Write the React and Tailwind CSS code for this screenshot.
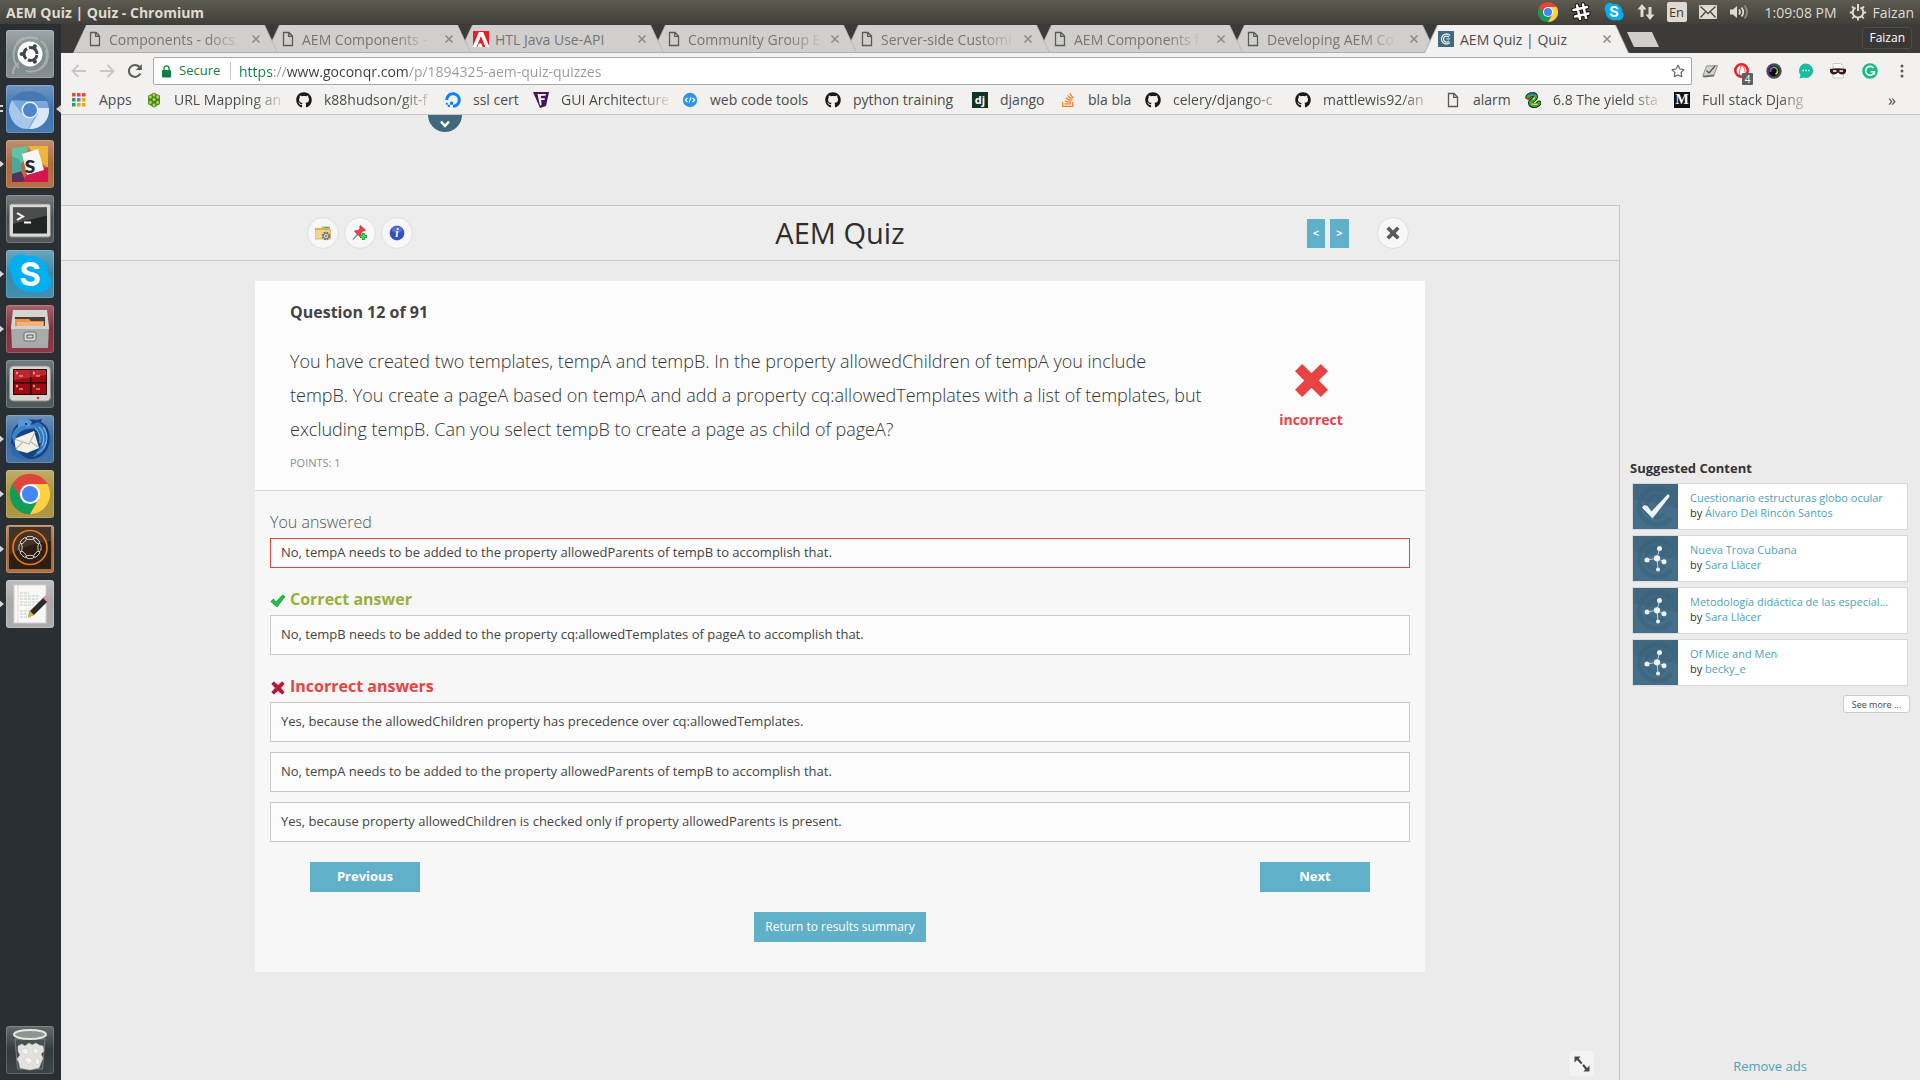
import React from 'react';
import { FaGithub, FaDigitalOcean, FaStackOverflow, FaRegStar } from 'react-icons/fa';

/* ---------- small icons ---------- */

const Doc = () => (
  <svg viewBox="0 0 16 16" className="size-4 shrink-0" fill="none" stroke="#5a5a5a" strokeWidth="1.300">
    <path d="M3.500 1.500h5.500l3.500 3.500v9.500h-9zM8.700 1.500v3.800h3.800" />
  </svg>
);

const Adobe = () => (
  <svg viewBox="0 0 16 16" className="size-4 shrink-0">
    <rect width="16" height="16" fill="#ed1c24" />
    <path d="M0 16V15L5.800 1h4.400L16 15v1h-3.800L8 5.600 5.600 11.500h3l1.500 4.500H0z" fill="#fff" />
    <path d="M3.500 16 8 5.600 12.200 16H9.700L8.500 12.500H5.900L4.500 16z" fill="#ed1c24" />
  </svg>
);

const Conqr = () => (
  <svg viewBox="0 0 16 16" className="size-4 shrink-0">
    <rect width="16" height="16" fill="#3f6a80" />
    <path d="M12 4.500A5 5 0 1 0 12 11.500M11 6.300A3 3 0 1 0 11 9.800" fill="none" stroke="#dfe9ee" strokeWidth="1.300" />
    <path d="M8.200 8H12" stroke="#dfe9ee" strokeWidth="1.200" />
  </svg>
);

const CloseX = () => (
  <svg viewBox="0 0 16 16" className="size-4" stroke="#8b8b8a" strokeWidth="1.500">
    <path d="M4.500 4.500l7 7M11.500 4.500l-7 7" />
  </svg>
);

const AppsGrid = () => (
  <svg viewBox="0 0 16 16" className="size-4 shrink-0">
    {['#e8453c', '#e8453c', '#e8453c', '#2a9d58', '#4285f4', '#f2a600', '#2a9d58', '#f2a600', '#f2a600'].map((c, i) => (
      <rect key={i} x={1 + (i % 3) * 5} y={1 + Math.floor(i / 3) * 5} width="3.500" height="3.500" fill={c} />
    ))}
  </svg>
);

const Balls = () => (
  <svg viewBox="0 0 16 16" className="size-4 shrink-0">
    <path d="M8 .8 14 4v8l-6 3.400L2 12V4z" fill="#4c8a18" />
    {[[8, 3], [4.300, 5], [11.700, 5], [8, 7.500], [4.300, 10.500], [11.700, 10.500], [8, 13]].map(([x, y]) => (
      <circle key={x + '-' + y} cx={x} cy={y} r="1.900" fill="#a6d75b" stroke="#356b10" strokeWidth=".5" />
    ))}
  </svg>
);

const FIcon = () => (
  <svg viewBox="0 0 16 16" className="size-4 shrink-0">
    <path d="M0 0h16l-3 14-6 2z" fill="#4a1259" />
    <path d="M4.500 2h8.500l-.5 1.800H8l-.4 2.500H12l-.5 1.800H8.200L8.500 13l-1.500.5z" fill="#fff" />
  </svg>
);

const CodeIcon = () => (
  <svg viewBox="0 0 16 16" className="size-4 shrink-0">
    <circle cx="8" cy="8" r="7.200" fill="#2f95ea" />
    <path d="M5.500 5.800 3.300 8l2.200 2.200M10.500 5.800 12.700 8l-2.200 2.200M8.800 5.300 7.200 10.700" fill="none" stroke="#fff" strokeWidth="1.200" />
  </svg>
);

const DjIcon = () => (
  <span className="flex size-4 shrink-0 items-center justify-center bg-[#113228] text-[11px] leading-none font-bold text-white">dj</span>
);

const MIcon = () => (
  <span className="flex size-4 shrink-0 items-center justify-center bg-[#111] font-['Liberation_Serif',serif] text-[14px] leading-none font-bold text-white">M</span>
);

const Snake = () => (
  <svg viewBox="0 0 16 16" className="size-4 shrink-0" fill="none" strokeLinecap="round">
    <path d="M3 5C5 2 10.500 1.500 10.500 5 10 8 5.500 8 5.500 11c.5 3 6.500 3.500 8.500 0" stroke="#111" strokeWidth="5" />
    <path d="M3 5C5 2 10.500 1.500 10.500 5 10 8 5.500 8 5.500 11c.5 3 6.500 3.500 8.500 0" stroke="#2fae2f" strokeWidth="3.400" />
    <path d="M1 6.500h4" stroke="#d22" strokeWidth="1.200" />
    <path d="M4 2l3-1 2 1" stroke="#2b4fc4" strokeWidth="1.800" />
    <path d="M7 12l5 .3M8 7.500l1.500-1.500" stroke="#e8e03a" strokeWidth="1.300" />
  </svg>
);

/* Chrome-style wheel, used in the tray and in the launcher */
const Wheel = ({ className, colors, hub }) => (
  <svg viewBox="0 0 48 48" className={className}>
    <circle cx="24" cy="24" r="22" fill={colors[0]} />
    <path d="M4.950 13A22 22 0 0 0 24 46L33.500 29.500 24 34 14.500 29.500z" fill={colors[1]} />
    <path d="M43.050 13H24L33.500 29.500 24 46A22 22 0 0 0 43.050 13z" fill={colors[2]} />
    <circle cx="24" cy="24" r="11" fill="#fff" />
    <circle cx="24" cy="24" r="8.800" fill={hub} />
  </svg>
);

/* ---------- launcher ---------- */

const skypeBlob =
  'M13 4.500c3.500-1 6 .2 8 1.700C31 4 42 11 42.500 24c2.500 4 3.500 8.500 1 13-3 5-9 6.500-14 4.500C19 44 6.500 37 6 25 3 20 3 14 5.500 10 7 7 10 5 13 4.500z';

const launcherItems = [
  {
    name: 'Search your computer', bg: 'bg-[#7f898b]',
    art: (
      <>
        <g fill="none" stroke="#c2cacb" strokeWidth="2" opacity=".55">
          <path d="M8 29C5 14 18 4 32 9M13 38C3 28 8 12 18 8M40 20c4 14-8 24-20 21M35 11c11 9 8 24-3 29M7 44c0-6 3-9 6-11" />
        </g>
        <circle cx="24" cy="24" r="12.500" fill="#fff" />
        <circle cx="24.500" cy="24" r="6.500" fill="none" stroke="#3f474a" strokeWidth="3" strokeDasharray="11.600 2" strokeDashoffset="-1" />
        <circle cx="15.700" cy="24" r="2.100" fill="#3f474a" />
        <circle cx="28.800" cy="16.300" r="2.100" fill="#3f474a" />
        <circle cx="28.800" cy="31.700" r="2.100" fill="#3f474a" />
      </>
    ),
  },
  {
    name: 'Chromium', bg: 'bg-[#3f74b0]', active: true,
    art: (
      <>
        <circle cx="24" cy="25" r="19" fill="#79a8dd" />
        <path d="M6 15A19 19 0 0 0 22 44l8-15-6 4-9-5z" fill="#a7c7eb" />
        <path d="M43 23H30l2 6-9 15A19 19 0 0 0 43 23z" fill="#d9e8f8" />
        <path d="M5 15C13 3 35 3 42 16L24 16z" fill="#4579b3" />
        <circle cx="24" cy="25" r="8.500" fill="#e8f1fb" />
        <circle cx="24" cy="25" r="7" fill="#4c86cf" />
      </>
    ),
  },
  {
    name: 'Slack', bg: 'bg-[#b0693f]', running: true,
    art: (
      <>
        <path d="M6 8 22 6 17 22 6 30z" fill="#5fc2a0" />
        <path d="M6 28 15 31 20 42 6 42z" fill="#5b3159" />
        <path d="M6 16 14 20 16 31 6 34z" fill="#4aa89a" />
        <path d="M22 6H42v22L32 20z" fill="#ecb53b" />
        <path d="M42 27V42H17l4-9z" fill="#d6154f" />
        <path d="M16 14 32 9l6 21-17 5z" fill="#f7f6f2" />
        <text x="24" y="33" textAnchor="middle" fontSize="25" fontWeight="700" fontFamily="Lato, sans-serif" fill="#262833">s</text>
      </>
    ),
  },
  {
    name: 'Terminal', bg: 'bg-[#4a5052]',
    art: (
      <>
        <rect x="3.500" y="9" width="41" height="33" rx="2" fill="#d9d9d7" stroke="#8b8b89" />
        <rect x="7" y="12.500" width="34" height="26" fill="#232424" />
        <path d="M7 12.500h34v8L7 29z" fill="#4b4c4c" />
        <path d="M11 18l6 3.500-6 3.500M18 27.500h7" fill="none" stroke="#fff" strokeWidth="2" />
      </>
    ),
  },
  {
    name: 'Skype', bg: 'bg-[#3a89ab]', running: true,
    art: (
      <>
        <path d={skypeBlob} fill="#00aff0" />
        <text x="24" y="36" textAnchor="middle" fontSize="33" fontWeight="700" fontFamily="Inter, sans-serif" fill="#fff">S</text>
      </>
    ),
  },
  {
    name: 'Files', bg: 'bg-[#84303d]', running: true,
    art: (
      <>
        <path d="M7 5h34l2 17H5z" fill="#d4d4d2" />
        <path d="M9 12h30v9H9z" fill="#49403a" />
        <path d="M9 14h14l2 2h13v6H9z" fill="#ef8f45" />
        <path d="M11 17h26v5H11z" fill="#f7b27a" />
        <path d="M5 21h38l-1 22H6z" fill="#a9abab" />
        <path d="M5 21h38v3H5z" fill="#cfd0d0" />
        <rect x="18" y="27" width="12" height="9" rx="2" fill="#d9dada" stroke="#6e7070" />
        <rect x="21" y="30" width="6" height="3" fill="none" stroke="#595b5b" />
      </>
    ),
  },
  {
    name: 'Terminator', bg: 'bg-[#4a5355]',
    art: (
      <>
        <rect x="3.500" y="6" width="41" height="35" rx="4" fill="#d5d6d2" stroke="#8f918e" />
        <rect x="7" y="9" width="34" height="26" fill="#2a0405" />
        <path d="M8 10h16v12H8zM25.500 10H40v12H25.500zM8 23.500h16V34H8zM25.500 23.500H40V34H25.500z" fill="#9d0a10" />
        <path d="M8 10h32v5L8 20z" fill="#d33a3d" opacity=".6" />
        <path d="M10 12l2 1-2 1M13 16h4M27 12l2 1-2 1M30 16h4M10 25l2 1-2 1M13 29h4M27 25l2 1-2 1M30 29h4" stroke="#f2b9b9" fill="none" />
        <circle cx="32" cy="38" r="1.200" fill="#e02020" />
      </>
    ),
  },
  {
    name: 'Thunderbird', bg: 'bg-[#3b6ca4]', running: true,
    art: (
      <>
        <path d="M6 18C9 7 20 3 30 5l6-1-1 3c8 4 10 13 8 22-2 9-9 15-18 15C14 44 5 37 5 28z" fill="#17427f" />
        <path d="M32 7c8 4 10 12 9 20-1 8-7 14-15 15 6-5 10-11 9-19-1-7-5-11-10-13z" fill="#2f78bf" />
        <path d="M33 12c5 5 6 12 3 19M37 12c5 6 5 14 1 21M28 12c5 4 7 9 6 16M31 38c5-2 8-6 9-11" stroke="#7db4e2" strokeWidth="1.200" fill="none" />
        <path d="M8 24l20-8 5 17-12 5-11-3z" fill="#f4f1e9" />
        <path d="M8 24l15 5 6-12M10 34l7-7M32 32l-7-5" fill="none" stroke="#b9b4a6" strokeWidth="1.100" />
        <path d="M5 36c1 5 8 9 17 8l-6-4-5-5-6-7z" fill="#2c69ab" />
        <path d="M6 22c1-8 7-13 15-13 4 0 7 1 8 4l-6 1c-6 0-10 3-13 8l-2 6z" fill="#3a83c6" />
        <path d="M12 6c3-3 10-3 14 1l-3 5c-4-2-8-1-11 1z" fill="#5598d4" />
        <circle cx="20" cy="9" r="1" fill="#0c1c34" />
      </>
    ),
  },
  { name: 'Google Chrome', bg: 'bg-[#a9933a]', running: true, wheel: true },
  {
    name: 'AEM Quickstart', bg: 'bg-[#a8683a]', running: true,
    art: (
      <>
        <rect x="3" y="2" width="42" height="42" fill="#2b1e15" />
        <path d="M3 2h42v14Q24 18 3 30z" fill="#5a4a3e" opacity=".5" />
        <circle cx="24" cy="22.500" r="17" fill="none" stroke="#f07a12" strokeWidth="1.700" />
        {[0, 45, 90, 135, 180, 225, 270, 315].map((a) => (
          <ellipse key={a} cx="24" cy="13" rx="4" ry="1.700" fill="none" stroke="#ead9cc" strokeWidth=".9" transform={`rotate(${a} 24 22.500)`} />
        ))}
      </>
    ),
  },
  {
    name: 'Text Editor', bg: 'bg-[#a9a9a9]', running: true,
    art: (
      <>
        <rect x="8" y="5" width="32" height="38" fill="#f8f8f6" stroke="#d0d0ce" />
        <path d="M12 5v38" stroke="#f0b9b9" strokeWidth=".6" />
        <path d="M14 13h9M14 16h20M14 19h18M14 22h20M14 25h14M14 31h12M14 34h9M14 37h12" stroke="#b7bcc0" strokeWidth=".8" strokeDasharray="3 1" />
        <path d="M24 31 38 17l4 4-14 14-6 2z" fill="#2b2b2b" />
        <path d="M24 31l4 4-6 2.500z" fill="#d9b93a" />
        <path d="M37 18l3-3 4 4-3 3z" fill="#e291ae" />
      </>
    ),
  },
];

const trash = (
  <>
    <path d="M9 13h30l-2.500 30h-25z" fill="#4a5252" opacity=".7" stroke="#8f9595" />
    <g fill="#e2e2df" stroke="#c6c6c2" strokeWidth=".5">
      <path d="M12 20l4-2 3 2 4-3 3 2 4-2 3 2 4 1 1 5-3 3 2 4-2 5-2 5-5 1-4 1-5-1-5-1-1-5-2-4 3-4-2-4z" />
      <path d="M15 24l5-2 3 4-4 3zM27 22l4 0 2 4-5 3zM18 33l5-2 4 4-5 4zM29 33l4-1 1 5-4 2z" fill="#f2f2f0" />
    </g>
    <ellipse cx="24" cy="8.500" rx="16" ry="4.500" fill="#8e9393" stroke="#e6e6e4" strokeWidth="2" />
  </>
);

function Tile({ item }) {
  return (
    <button
      type="button"
      aria-label={item.name}
      className={`relative mx-auto size-12 shrink-0 rounded-[3px] bg-gradient-to-b from-white/25 via-transparent to-white/5 shadow-[inset_0_0_0_1px_rgba(255,255,255,0.18)] ${item.bg}`}
    >
      {item.wheel ? (
        <Wheel className="mx-auto size-[44px]" colors={['#e0453b', '#0f9d58', '#fdd046']} hub="#4285f4" />
      ) : (
        <svg viewBox="0 0 48 48" className="size-12">{item.art}</svg>
      )}
      {item.running && (
        <span className="absolute top-1/2 -left-[7px] -mt-1 border-y-4 border-l-[5px] border-y-transparent border-l-[#d5d6d6]" />
      )}
      {item.active && (
        <>
          <span className="absolute top-5 -left-[7px] h-[7px] w-1 border-y-2 border-[#d5d6d6]" />
          <span className="absolute top-5 -right-[7px] border-y-4 border-r-[5px] border-y-transparent border-r-[#d5d6d6]" />
        </>
      )}
    </button>
  );
}

const Launcher = () => (
  <nav aria-label="Launcher" className="flex w-[61px] shrink-0 flex-col gap-[7px] overflow-hidden bg-[#2a2f33] pt-1.5 pr-px pb-1.5">
    {launcherItems.map((item) => (
      <Tile key={item.name} item={item} />
    ))}
    <div className="mt-auto flex">
      <Tile item={{ name: 'Trash', bg: 'bg-[#343b3e]', art: trash }} />
    </div>
  </nav>
);

/* ---------- system bar ---------- */

const SystemBar = () => (
  <header className="flex h-6 items-center bg-gradient-to-b from-[#5e5b50] to-[#403f3a] px-1.5 text-[14px] text-[#dfdbd2]">
    <h1 className="text-[14px] font-bold">AEM Quiz | Quiz - Chromium</h1>
    <div className="ml-auto flex items-center gap-3">
      <Wheel className="size-[22px]" colors={['#e0453b', '#0f9d58', '#fdd046']} hub="#4285f4" />
      <svg viewBox="0 0 20 20" className="size-5" fill="none" strokeLinecap="round">
        <path d="M6 3.500 9 17M12 2.500 15 16M2.500 8 16 5M4 14.500 17.500 11.500" stroke="#111" strokeWidth="4.500" />
        <path d="M6 3.500 9 17M12 2.500 15 16M2.500 8 16 5M4 14.500 17.500 11.500" stroke="#fff" strokeWidth="2.500" />
      </svg>
      <svg viewBox="0 0 48 48" className="size-[22px]">
        <path d={skypeBlob} fill="#00aff0" />
        <text x="24" y="35" textAnchor="middle" fontSize="32" fontWeight="700" fontFamily="Inter, sans-serif" fill="#fff">S</text>
      </svg>
      <svg viewBox="0 0 18 18" className="size-[18px]" fill="#dfdbd2">
        <path d="M5 1 9.500 6.500H6.500V14h-3V6.500H.5zM13 17 8.500 11.500h3V4h3v7.500h3z" />
      </svg>
      <span className="flex size-5 items-center justify-center rounded-[2px] bg-[#dfdbd2] text-[13px] leading-none text-[#3c3b37]">En</span>
      <svg viewBox="0 0 18 14" className="h-3.5 w-[18px]">
        <rect width="18" height="14" rx="1" fill="#dfdbd2" />
        <path d="M1.500 1.500 9 8.500l7.500-7M1.500 12.500l5-5.500M16.500 12.500l-5-5.500" fill="none" stroke="#4a4944" strokeWidth="1.300" />
      </svg>
      <svg viewBox="0 0 20 16" className="h-4 w-5" fill="none" stroke="#dfdbd2" strokeWidth="1.700">
        <path d="M1 5.500h3L8 2v12l-4-3.500H1z" fill="#dfdbd2" stroke="none" />
        <path d="M10 5.500q2 2.500 0 5M12.500 3.500q3.500 4.500 0 9" />
        <path d="M15.500 1.500q5 6.500 0 13" opacity=".45" />
      </svg>
      <span className="ml-1">1:09:08 PM</span>
      <span className="flex items-center gap-1.5">
        <svg viewBox="0 0 18 18" className="size-[18px]" fill="none" stroke="#dfdbd2">
          <path d="M6.500 4.600a5.300 5.300 0 1 0 5 0" strokeWidth="2" />
          <path d="M9 1v7" strokeWidth="2" />
          <path d="M3 3.500l2 2M15 3.500l-2 2M.8 9.500H4M17.200 9.500H14M3.200 15.300l2-2M14.800 15.300l-2-2M9 17.500V14.500" strokeWidth="1.800" />
        </svg>
        Faizan
      </span>
    </div>
  </header>
);

/* ---------- browser chrome ---------- */

const tabs = [
  { title: 'Components - docs.', icon: <Doc />, z: 'z-[8]' },
  { title: 'AEM Components -', icon: <Doc />, z: 'z-[7]' },
  { title: 'HTL Java Use-API', icon: <Adobe />, z: 'z-[6]', whole: true },
  { title: 'Community Group E', icon: <Doc />, z: 'z-[5]' },
  { title: 'Server-side Customi', icon: <Doc />, z: 'z-[4]' },
  { title: 'AEM Components f', icon: <Doc />, z: 'z-[3]' },
  { title: 'Developing AEM Co', icon: <Doc />, z: 'z-[2]' },
  { title: 'AEM Quiz | Quiz', icon: <Conqr />, z: 'z-[9]', active: true, whole: true },
];

const slant = '[clip-path:polygon(0_100%,13px_0,calc(100%-13px)_0,100%_100%)]';
const fade = '[mask-image:linear-gradient(to_right,#000_calc(100%-32px),rgba(0,0,0,0.1))]';

const TabStrip = () => (
  <div className="flex items-end bg-[#3c3b37] pt-px pr-2 pl-3">
    <div role="tablist" className="flex">
      {tabs.map((t) => (
        <div key={t.title} className={`relative -mr-3 flex h-7 w-[205px] items-center bg-[#b0afad] ${slant} ${t.z}`}>
          <span className={`absolute inset-x-px top-0 ${slant} ${t.active ? 'bottom-0 bg-[#f2f1f0]' : 'bottom-px bg-[#d0cfcd]'}`} />
          <button
            type="button"
            role="tab"
            aria-selected={!!t.active}
            className={`relative ml-3.5 flex w-[161px] items-center gap-1.5 text-[14px] ${t.active ? 'text-[#4c4c4c]' : 'text-[#777675]'}`}
          >
            {t.icon}
            <span className={`text-left whitespace-nowrap ${t.whole ? '' : fade}`}>{t.title}</span>
          </button>
          <button type="button" aria-label={`Close ${t.title}`} className="relative">
            <CloseX />
          </button>
        </div>
      ))}
    </div>
    <button
      type="button"
      aria-label="New tab"
      className="mb-1.5 ml-2.5 h-[15px] w-8 bg-[#cfcecc] [clip-path:polygon(0_0,calc(100%-7px)_0,100%_100%,7px_100%)]"
    />
    <button type="button" className="mb-1 ml-auto h-[22px] rounded-[3px] border border-[#4d4c48] bg-[#393834] px-1.5 text-[12px] leading-none text-white">
      Faizan
    </button>
  </div>
);

const extensions = [
  {
    name: 'Checker',
    art: (
      <>
        <path d="M4.500 3 15.500 2.500 12 12 .8 13z" fill="#d4d4d2" stroke="#7c7c7a" strokeWidth=".8" />
        <path d="M.8 13 12 12l.3 1.500L1.500 14.500z" fill="#6a6a68" />
        <path d="M4.500 7.500l2.500 2.500 6-7" fill="none" stroke="#555" strokeWidth="1.300" />
      </>
    ),
  },
  {
    name: 'Ad blocker', badge: '4',
    art: (
      <>
        <circle cx="7.500" cy="7.500" r="6.200" fill="#fff" stroke="#e8202a" strokeWidth="2.600" />
        <path d="M5.500 12V6.500h1V3.500h1V2.500h1v1h1v1h1V8l1 1-1.500 3z" fill="#fff" stroke="#e8202a" strokeWidth=".6" />
      </>
    ),
  },
  {
    name: 'Colour picker',
    art: (
      <>
        <circle cx="8" cy="8" r="7.700" fill="#4a4a55" />
        <circle cx="8" cy="8" r="5.300" fill="#0c0c12" />
        <path d="M4.500 9A3.500 3.500 0 0 1 7 4.500" fill="none" stroke="#b04ae0" strokeWidth="1.800" />
        <path d="M7 4.500A3.500 3.500 0 0 1 11.500 7.500" fill="none" stroke="#34c84a" strokeWidth="1.800" />
        <path d="M11.500 7.500a3.500 3.500 0 0 1-2 3.700" fill="none" stroke="#e8c32c" strokeWidth="1.500" />
      </>
    ),
  },
  {
    name: 'Messages',
    art: (
      <>
        <path d="M8 .5a7.200 7.200 0 1 1-2.500 14L1.500 15.500 2.500 12A7.200 7.200 0 0 1 8 .5z" fill="#15bf9e" />
        <path d="M4.500 7.500h1.500M7.300 7.500h1.500M10 7.500h1.500" stroke="#fff" strokeWidth="1.500" />
      </>
    ),
  },
  {
    name: 'Mask',
    art: (
      <>
        <path d="M3 .5h7.500L13.500 3v12H3z" fill="#fafafa" stroke="#c9c9c9" />
        <path d="M0 6q8-1.500 16 0v2.500q-.5 3-4 3-2.500 0-4-2-1.500 2-4 2-3.500 0-4-3z" fill="#3b1520" />
        <path d="M3 8h3.500M9.500 8H13" stroke="#fff" strokeWidth="1.500" />
      </>
    ),
  },
  {
    name: 'Grammarly',
    art: (
      <>
        <circle cx="8" cy="8" r="7.800" fill="#14bd7f" />
        <path d="M11.500 5A4.400 4.400 0 1 0 12.400 8.700H8.700M12.400 8.700V11.500" fill="none" stroke="#fff" strokeWidth="1.600" />
      </>
    ),
  },
];

const Toolbar = () => (
  <div className="flex items-center gap-3 px-2.5 pt-1">
    <button type="button" aria-label="Back">
      <svg viewBox="0 0 16 16" className="size-4" fill="none" stroke="#c9c8c7" strokeWidth="1.800"><path d="M15 8H1.800M7.500 2 1.500 8l6 6" /></svg>
    </button>
    <button type="button" aria-label="Forward">
      <svg viewBox="0 0 16 16" className="size-4" fill="none" stroke="#c9c8c7" strokeWidth="1.800"><path d="M1 8h13.200M8.500 2l6 6-6 6" /></svg>
    </button>
    <button type="button" aria-label="Reload">
      <svg viewBox="0 0 16 16" className="size-4" fill="none" stroke="#5a5a5a" strokeWidth="2"><path d="M13.300 10.500A6 6 0 1 1 12.300 3.800" /><path d="M14.800 1v6H8.800z" fill="#5a5a5a" stroke="none" /></svg>
    </button>
    <div className="-ml-0.5 flex h-7 flex-1 items-center rounded-[2px] border border-[#a9a8a7] bg-white pr-1.5 pl-2 text-[14px]">
      <svg viewBox="0 0 9 13" className="h-[13px] w-[9px]"><rect y="5" width="9" height="7.500" rx="1" fill="#0b8043" /><path d="M2 5.500V3.300a2.500 2.500 0 0 1 5 0v2.200" fill="none" stroke="#0b8043" strokeWidth="1.300" /></svg>
      <span className="ml-2 w-[43px] text-[13px] text-[#0b8043]">Secure</span>
      <span className="mx-2 h-[18px] w-px shrink-0 bg-[#c4c4c4]" />
      <input
        type="text"
        aria-label="Address"
        defaultValue="https://www.goconqr.com/p/1894325-aem-quiz-quizzes"
        className="flex-1 bg-[linear-gradient(to_right,#0b8043_34px,#999_34px,#999_48px,#3a3a3a_48px,#3a3a3a_169px,#999_169px)] bg-clip-text text-transparent outline-none"
      />
      <button type="button" aria-label="Bookmark this page"><FaRegStar className="size-3.5 text-[#666]" /></button>
    </div>
    <div className="-ml-2 flex items-center gap-4 pl-1.5">
      {extensions.map((e) => (
        <button key={e.name} type="button" aria-label={e.name} className="relative size-4">
          <svg viewBox="0 0 16 16" className="size-4">{e.art}</svg>
          {e.badge && (
            <span className="absolute top-2.5 left-2 flex h-3 w-[11px] items-center justify-center rounded-[1px] bg-[#606060] text-[10px] leading-none text-white">{e.badge}</span>
          )}
        </button>
      ))}
      <button type="button" aria-label="Menu">
        <svg viewBox="0 0 16 16" className="size-4" fill="#5a5a5a"><circle cx="8" cy="3" r="1.500" /><circle cx="8" cy="8" r="1.500" /><circle cx="8" cy="13" r="1.500" /></svg>
      </button>
    </div>
  </div>
);

const gh = <FaGithub className="size-4 shrink-0 text-[#1b1817]" />;
const bookmarks = [
  { label: 'Apps', w: 'w-[35px]', icon: <AppsGrid /> },
  { label: 'URL Mapping an', w: 'w-[110px]', icon: <Balls />, cut: true },
  { label: 'k88hudson/git-f', w: 'w-[109px]', icon: gh, cut: true },
  { label: 'ssl cert', w: 'w-12', icon: <FaDigitalOcean className="size-4 shrink-0 text-[#0f80ff]" /> },
  { label: 'GUI Architecture', w: 'w-[109px]', icon: <FIcon />, cut: true },
  { label: 'web code tools', w: 'w-[103px]', icon: <CodeIcon /> },
  { label: 'python training', w: 'w-[107px]', icon: gh },
  { label: 'django', w: 'w-12', icon: <DjIcon /> },
  { label: 'bla bla', w: 'w-[45px]', icon: <FaStackOverflow className="size-4 shrink-0 text-[#f48024]" /> },
  { label: 'celery/django-c', w: 'w-[110px]', icon: gh, cut: true },
  { label: 'mattlewis92/an', w: 'w-[110px]', icon: gh, cut: true },
  { label: 'alarm', w: 'w-10', icon: <Doc /> },
  { label: '6.8 The yield sta', w: 'w-[109px]', icon: <Snake />, cut: true },
  { label: 'Full stack Djang', w: 'w-[109px]', icon: <MIcon />, cut: true },
];

const BookmarksBar = () => (
  <nav aria-label="Bookmarks" className="flex h-[30px] items-center gap-3 border-b border-[#c6c5c4] pr-6 pl-2.5 text-[14px] text-[#4c4c4c]">
    {bookmarks.map((b) => (
      <a key={b.label} href="#" className="flex items-center gap-3">
        {b.icon}
        <span className={`whitespace-nowrap ${b.w} ${b.cut ? fade : ''}`}>{b.label}</span>
      </a>
    ))}
    <button type="button" aria-label="More bookmarks" className="ml-auto text-[16px]">»</button>
  </nav>
);

/* ---------- quiz page ---------- */

const crossPath = 'M7 1 16 10 25 1 31 7 22 16 31 25 25 31 16 22 7 31 1 25 10 16 1 7z';

const RoundButton = ({ label, children }) => (
  <button type="button" aria-label={label} className="flex size-8 items-center justify-center rounded-full border border-[#dedede] bg-[#f7f7f7]">
    {children}
  </button>
);

const QuizHeader = () => (
  <header className="border-b border-[#c8c8c8] bg-[#ededed]">
    <div className="mx-auto grid h-[54px] max-w-[1170px] grid-cols-[1fr_auto_1fr] items-center">
      <div className="flex gap-[5px] pl-[52px]">
        <RoundButton label="Folder settings">
          <svg viewBox="0 0 16 16" className="size-4">
            <path d="M0 3h6l1-1.500h8v11.500H0z" fill="#d9b65c" />
            <path d="M0 4.500h15.500V14H0z" fill="#f0d68d" stroke="#c9a049" strokeWidth=".6" />
            <path d="M9 2.500h5" stroke="#4aa8a0" />
            <circle cx="11" cy="11" r="3" fill="none" stroke="#6f6f6f" strokeWidth="2.600" strokeDasharray="1.600 .75" />
            <circle cx="11" cy="11" r="2.600" fill="#dcdcdc" stroke="#6f6f6f" strokeWidth=".8" />
            <circle cx="11" cy="11" r="1" fill="#777" />
          </svg>
        </RoundButton>
        <RoundButton label="Pin">
          <svg viewBox="0 0 16 16" className="size-4">
            <path d="M1 14.500 6 9" stroke="#888" strokeWidth="1.400" />
            <path d="M8.500.5 13.500 5l-1 1-1.500-.3L9 8.500l.3 2.500-1 1L2.500 6.500l1-1L6 5.700 8 3.300 7.700 1.500z" fill="#e8414a" stroke="#b8202b" strokeWidth=".6" />
            <path d="M11.500 8v7M8 11.500h7" stroke="#1f9e3a" strokeWidth="3" />
            <path d="M11.500 8.700v5.600M8.700 11.500h5.600" stroke="#4fd86a" strokeWidth="1.500" />
          </svg>
        </RoundButton>
        <RoundButton label="Information">
          <svg viewBox="0 0 16 16" className="size-4">
            <circle cx="8" cy="8" r="7" fill="#2f50c8" stroke="#1d338c" strokeWidth=".6" />
            <ellipse cx="8" cy="4.800" rx="5.200" ry="3.200" fill="#7d98ec" opacity=".5" />
            <text x="8" y="12.300" textAnchor="middle" fontSize="12" fontStyle="italic" fontWeight="700" fontFamily="Liberation Serif, serif" fill="#fff">i</text>
          </svg>
        </RoundButton>
      </div>
      <h2 className="text-[29px] leading-9 text-[#2e2e2e]">AEM Quiz</h2>
      <div className="flex items-center justify-end gap-[5px] pr-4">
        <button type="button" aria-label="Previous question" className="h-[29px] w-[18px] bg-[#61b0c9] text-[11px] font-bold text-white">&lt;</button>
        <button type="button" aria-label="Next question" className="h-[29px] w-[19px] bg-[#61b0c9] text-[11px] font-bold text-white">&gt;</button>
        <div className="ml-[23px]">
          <RoundButton label="Close quiz">
            <svg viewBox="0 0 32 32" className="size-3.5"><path d={crossPath} fill="#595959" /></svg>
          </RoundButton>
        </div>
      </div>
    </div>
  </header>
);

const Box = ({ children }) => (
  <li className="flex h-10 items-center border border-[#c8c8c8] bg-[#fcfcfc] px-2.5">{children}</li>
);

const QuizCard = () => (
  <article className="mx-auto mt-5 w-full max-w-[1170px] bg-[#f7f7f7] text-[13px] text-[#444]">
    <div className="flex border-b border-[#dadada] bg-[#fcfcfc]">
      <div className="flex-1 pt-[19px] pb-[18px] pl-[35px]">
        <h3 className="text-[16px] leading-6 font-bold">Question 12 of 91</h3>
        <p className="mt-5 text-[18px] leading-[34px] font-light text-[#333]">
          You have created two templates, tempA and tempB. In the property allowedChildren of tempA you include
          <br />
          tempB. You create a pageA based on tempA and add a property cq:allowedTemplates with a list of templates, but excluding tempB. Can you
          select tempB to create a page as child of pageA?
        </p>
        <p className="mt-2 text-[11px] leading-[18px] text-[#8d8d8d]">POINTS: 1</p>
      </div>
      <div className="mr-2.5 flex w-[208px] flex-col items-center pt-[83px] text-[#e84343]">
        <svg viewBox="0 0 32 32" className="size-[33px]"><path d={crossPath} fill="#e84343" stroke="#e84343" strokeWidth="1.500" strokeLinejoin="round" /></svg>
        <strong className="mt-[13px] text-[14px] leading-5 font-bold">incorrect</strong>
      </div>
    </div>
    <div className="px-[15px] pt-[19px] pb-[30px]">
      <h4 className="text-[16px] leading-6 font-light text-[#555]">You answered</h4>
      <p className="mt-1 flex h-[30px] items-center border border-[#e84343] bg-[#fcfcfc] px-2.5">
        No, tempA needs to be added to the property allowedParents of tempB to accomplish that.
      </p>
      <h4 className="mt-[19px] flex items-center gap-1 text-[16px] leading-6 font-bold text-[#9aae3e]">
        <svg viewBox="0 0 16 16" className="mt-1 size-4">
          <path d="M.8 8.500 3.500 6l2.500 3L12.500 2l2.500 1.500L7 14z" fill="#1fbf4b" stroke="#128a34" strokeWidth=".7" strokeLinejoin="round" />
        </svg>
        Correct answer
      </h4>
      <ul className="mt-1">
        <Box>No, tempB needs to be added to the property cq:allowedTemplates of pageA to accomplish that.</Box>
      </ul>
      <h4 className="mt-[19px] flex items-center gap-1 text-[16px] leading-6 font-bold text-[#e84343]">
        <svg viewBox="0 0 16 16" className="mt-1 size-4">
          <path d="M3.800 1.800 8 5.500l4.200-3.700L14.200 4 10.500 8l3.700 4-2 2.200L8 10.500l-4.200 3.700L1.800 12 5.500 8 1.800 4z" fill="#c2142f" stroke="#8c0a20" strokeWidth=".7" />
        </svg>
        Incorrect answers
      </h4>
      <ul className="mt-1 flex flex-col gap-2.5">
        <Box>Yes, because the allowedChildren property has precedence over cq:allowedTemplates.</Box>
        <Box>No, tempA needs to be added to the property allowedParents of tempB to accomplish that.</Box>
        <Box>Yes, because property allowedChildren is checked only if property allowedParents is present.</Box>
      </ul>
      <div className="mt-5 flex justify-between px-10 font-bold text-white text-shadow-[1px_1px_1px_rgba(0,0,0,0.3)]">
        <button type="button" className="h-[30px] w-[110px] bg-[#61b0c9]">Previous</button>
        <button type="button" className="h-[30px] w-[110px] bg-[#61b0c9]">Next</button>
      </div>
      <button type="button" className="mx-auto mt-5 block h-[30px] w-[172px] bg-[#61b0c9] text-[12px] text-white">Return to results summary</button>
    </div>
  </article>
);

const Thumb = ({ kind }) => (
  <svg viewBox="0 0 45 45" className="size-[45px] shrink-0">
    <rect width="45" height="45" fill="#456f89" />
    <path d="M0 15 45 24V0H0z" fill="#3f6780" />
    <path d="M38 11A18 18 0 1 0 38 34M31 15a10.500 10.500 0 1 0 0 15" fill="none" stroke="#38607a" strokeWidth="4.500" opacity=".5" />
    {kind === 'check' ? (
      <path d="M9 23.500 11.500 21l3 1 4 5.500L34.500 10.500h1.800v2.500L19.500 34.500z" fill="#eef3f5" />
    ) : (
      <g fill="#eef3f5" stroke="#b9cbd5" strokeWidth="1">
        <path d="M14 24 24 22.300 26.500 12.500M24 22.300l7 3.700M24 22.300 25 33.500" fill="none" />
        <circle cx="24" cy="22.300" r="3.100" stroke="none" />
        <circle cx="26.500" cy="12.500" r="2.500" stroke="none" />
        <circle cx="14" cy="24" r="2.500" stroke="none" />
        <circle cx="31" cy="25.800" r="2.500" stroke="none" />
        <circle cx="25" cy="33.500" r="2" stroke="none" />
      </g>
    )}
  </svg>
);

const suggestions = [
  { title: 'Cuestionario estructuras globo ocular', by: 'Álvaro Del Rincón Santos', kind: 'check' },
  { title: 'Nueva Trova Cubana', by: 'Sara Llàcer' },
  { title: 'Metodología didáctica de las especial...', by: 'Sara Llàcer' },
  { title: 'Of Mice and Men', by: 'becky_e' },
];

const Suggested = () => (
  <aside className="flex w-[301px] shrink-0 flex-col border-l border-[#c8c8c8] pt-[253px] pb-1">
    <h3 className="pl-2.5 text-[13px] leading-5 font-bold text-[#333]">Suggested Content</h3>
    <ul className="mt-[5px] flex flex-col gap-[5px] px-3">
      {suggestions.map((s) => (
        <li key={s.title} className="flex gap-3 border border-[#d9d9d9] bg-white text-[11px] leading-[15px] text-[#333]">
          <Thumb kind={s.kind} />
          <div className="min-w-0 pt-1.5">
            <a href="#" className="block whitespace-nowrap text-[#4da3b8]">{s.title}</a>
            by <a href="#" className="text-[#4da3b8]">{s.by}</a>
          </div>
        </li>
      ))}
    </ul>
    <button type="button" className="mt-[9px] mr-2.5 h-[18px] self-end rounded-[3px] border border-[#ccc] bg-white px-2 text-[9px] leading-none text-[#444]">See more ...</button>
    <a href="#" className="mt-auto self-center text-[13px] leading-5 text-[#4da3b8]">Remove ads</a>
  </aside>
);

export default function App() {
  return (
    <div className="flex min-h-screen flex-col bg-[#ebebeb] font-['Open_Sans',sans-serif]">
      <SystemBar />
      <div className="flex flex-1">
        <Launcher />
        <div className="flex min-w-0 flex-1 flex-col">
          <TabStrip />
          <div className="bg-[#f2f1f0]">
            <Toolbar />
            <BookmarksBar />
          </div>
          <div className="h-[90px] pl-[367px]">
            <button type="button" aria-label="Show menu" className="flex h-[17px] w-[34px] items-center justify-center rounded-b-full bg-[#40687c]">
              <svg viewBox="0 0 10 8" className="h-2 w-2.5" fill="none" stroke="#fff" strokeWidth="2.400"><path d="M1 1.500l4 4.500 4-4.500" /></svg>
            </button>
          </div>
          <div className="flex flex-1">
            <main className="flex min-w-0 flex-1 flex-col border-t border-[#c8c8c8]">
              <QuizHeader />
              <QuizCard />
              <button type="button" aria-label="Full screen" className="mt-auto mr-[25px] mb-1 flex size-[25px] items-center justify-center self-end rounded bg-[#f3f3f3]">
                <svg viewBox="0 0 16 16" className="size-4" fill="#4a4a4a">
                  <path d="M.5.5h6L4.800 2.500 8.500 7 7 8.200 3 4 .5 6.500zM15.500 15.500h-6l1.700-2L8.200 9.500 9.800 8l3.200 4 2.500-2.500z" />
                </svg>
              </button>
            </main>
            <Suggested />
          </div>
        </div>
      </div>
    </div>
  );
}
